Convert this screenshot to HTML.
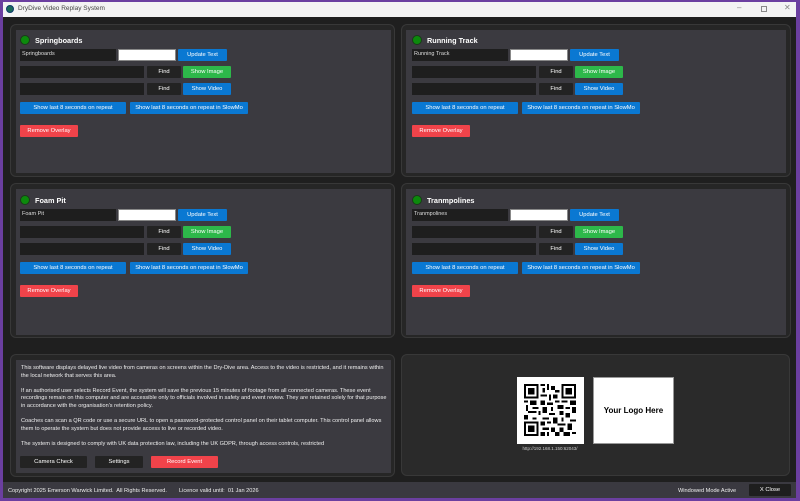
<!DOCTYPE html>
<html><head><meta charset="utf-8"><style>
*{margin:0;padding:0;box-sizing:border-box}
body{width:800px;height:501px;background:#6b3fa0;font-family:"Liberation Sans",sans-serif;position:relative;overflow:hidden}
.win{position:absolute;left:3px;top:2px;width:793px;height:496px;background:#1f1f1f}
.tb{position:absolute;left:0;top:0;width:793px;height:15px;background:#f3f3f3;font-size:6.5px;color:#444}
.a{position:absolute;white-space:nowrap}
.card{position:absolute;background:#262626;border:1px solid #383838;border-radius:6px}
.inner{position:absolute;background:#3b3a40}
.in{position:absolute;background:#1e1e1e;height:12px;color:#ddd;font-size:5.5px;padding:2px 2px;line-height:7px;white-space:nowrap}
.b{position:absolute;height:12px;color:#fff;font-size:5.8px;text-align:center;line-height:12px;border-radius:1px;white-space:nowrap}
.bl{background:#0a78d2}.gr{background:#2db84a}.rd{background:#f0434a}.dk{background:#232323}
.tt{position:absolute;color:#fff;font-weight:bold;font-size:7.3px;white-space:nowrap}
.dot{position:absolute;width:10px;height:10px;border-radius:50%;background:#0c8a0c;border:1px solid #1a3a1a}
.txt{position:absolute;color:#eee;font-size:5.6px;line-height:7.6px}
</style></head><body>
<div class="win">
<div class="tb"><div class="a" style="left:3px;top:3px;width:8px;height:8px;border-radius:50%;background:#1a6a5a;border:1px solid #0c3a6a"></div><div class="a" style="left:15px;top:3px">DryDive Video Replay System</div>
<div class="a" style="left:734px;top:1px;color:#888;font-size:8px">–</div><div class="a" style="left:758px;top:4px;width:6px;height:6px;border:1px solid #888"></div><div class="a" style="left:781px;top:1px;color:#888;font-size:8px">✕</div></div>
</div>

<div class="card" style="left:10px;top:24px;width:385px;height:153px"></div>
<div class="inner" style="left:16px;top:30px;width:375px;height:143px"></div>
<div class="card" style="left:401px;top:24px;width:390px;height:153px"></div>
<div class="inner" style="left:406px;top:30px;width:380px;height:143px"></div>
<div class="card" style="left:10px;top:183px;width:385px;height:155px"></div>
<div class="inner" style="left:16px;top:189px;width:375px;height:146px"></div>
<div class="card" style="left:401px;top:183px;width:390px;height:155px"></div>
<div class="inner" style="left:406px;top:189px;width:380px;height:146px"></div>

<div style="position:absolute;left:0;top:0">
<div class="dot" style="left:20px;top:35px"></div><div class="tt" style="left:35px;top:36px">Springboards</div>
<div class="in" style="left:20px;top:49px;width:96px">Springboards</div><div class="a" style="left:118px;top:49px;width:58px;height:12px;background:#fff;border:1px solid #888"></div><div class="b bl" style="left:178px;top:49px;width:49px">Update Text</div>
<div class="in" style="left:20px;top:66px;width:124px"></div><div class="b dk" style="left:147px;top:66px;width:34px">Find</div><div class="b gr" style="left:183px;top:66px;width:48px">Show Image</div>
<div class="in" style="left:20px;top:83px;width:124px"></div><div class="b dk" style="left:147px;top:83px;width:34px">Find</div><div class="b bl" style="left:183px;top:83px;width:48px">Show Video</div>
<div class="b bl" style="left:20px;top:102px;width:106px">Show last 8 seconds on repeat</div><div class="b bl" style="left:130px;top:102px;width:118px">Show last 8 seconds on repeat in SlowMo</div>
<div class="b rd" style="left:20px;top:125px;width:58px">Remove Overlay</div>
</div>
<div style="position:absolute;left:392px;top:0">
<div class="dot" style="left:20px;top:35px"></div><div class="tt" style="left:35px;top:36px">Running Track</div>
<div class="in" style="left:20px;top:49px;width:96px">Running Track</div><div class="a" style="left:118px;top:49px;width:58px;height:12px;background:#fff;border:1px solid #888"></div><div class="b bl" style="left:178px;top:49px;width:49px">Update Text</div>
<div class="in" style="left:20px;top:66px;width:124px"></div><div class="b dk" style="left:147px;top:66px;width:34px">Find</div><div class="b gr" style="left:183px;top:66px;width:48px">Show Image</div>
<div class="in" style="left:20px;top:83px;width:124px"></div><div class="b dk" style="left:147px;top:83px;width:34px">Find</div><div class="b bl" style="left:183px;top:83px;width:48px">Show Video</div>
<div class="b bl" style="left:20px;top:102px;width:106px">Show last 8 seconds on repeat</div><div class="b bl" style="left:130px;top:102px;width:118px">Show last 8 seconds on repeat in SlowMo</div>
<div class="b rd" style="left:20px;top:125px;width:58px">Remove Overlay</div>
</div>
<div style="position:absolute;left:0;top:160px">
<div class="dot" style="left:20px;top:35px"></div><div class="tt" style="left:35px;top:36px">Foam Pit</div>
<div class="in" style="left:20px;top:49px;width:96px">Foam Pit</div><div class="a" style="left:118px;top:49px;width:58px;height:12px;background:#fff;border:1px solid #888"></div><div class="b bl" style="left:178px;top:49px;width:49px">Update Text</div>
<div class="in" style="left:20px;top:66px;width:124px"></div><div class="b dk" style="left:147px;top:66px;width:34px">Find</div><div class="b gr" style="left:183px;top:66px;width:48px">Show Image</div>
<div class="in" style="left:20px;top:83px;width:124px"></div><div class="b dk" style="left:147px;top:83px;width:34px">Find</div><div class="b bl" style="left:183px;top:83px;width:48px">Show Video</div>
<div class="b bl" style="left:20px;top:102px;width:106px">Show last 8 seconds on repeat</div><div class="b bl" style="left:130px;top:102px;width:118px">Show last 8 seconds on repeat in SlowMo</div>
<div class="b rd" style="left:20px;top:125px;width:58px">Remove Overlay</div>
</div>
<div style="position:absolute;left:392px;top:160px">
<div class="dot" style="left:20px;top:35px"></div><div class="tt" style="left:35px;top:36px">Tranmpolines</div>
<div class="in" style="left:20px;top:49px;width:96px">Tranmpolines</div><div class="a" style="left:118px;top:49px;width:58px;height:12px;background:#fff;border:1px solid #888"></div><div class="b bl" style="left:178px;top:49px;width:49px">Update Text</div>
<div class="in" style="left:20px;top:66px;width:124px"></div><div class="b dk" style="left:147px;top:66px;width:34px">Find</div><div class="b gr" style="left:183px;top:66px;width:48px">Show Image</div>
<div class="in" style="left:20px;top:83px;width:124px"></div><div class="b dk" style="left:147px;top:83px;width:34px">Find</div><div class="b bl" style="left:183px;top:83px;width:48px">Show Video</div>
<div class="b bl" style="left:20px;top:102px;width:106px">Show last 8 seconds on repeat</div><div class="b bl" style="left:130px;top:102px;width:118px">Show last 8 seconds on repeat in SlowMo</div>
<div class="b rd" style="left:20px;top:125px;width:58px">Remove Overlay</div>
</div>

<div class="card" style="left:10px;top:354px;width:385px;height:123px"></div>
<div class="inner" style="left:16px;top:360px;width:375px;height:113px"></div>
<div class="txt" style="left:21px;top:365px;width:368px">This software displays delayed live video from cameras on screens within the Dry-Dive area. Access to the video is restricted, and it remains within the local network that serves this area.<br><br>If an authorised user selects Record Event, the system will save the previous 15 minutes of footage from all connected cameras. These event recordings remain on this computer and are accessible only to officials involved in safety and event review. They are retained solely for that purpose in accordance with the organisation's retention policy.<br><br>Coaches can scan a QR code or use a secure URL to open a password-protected control panel on their tablet computer. This control panel allows them to operate the system but does not provide access to live or recorded video.<br><br>The system is designed to comply with UK data protection law, including the UK GDPR, through access controls, restricted</div>
<div class="b dk" style="left:20px;top:456px;width:67px">Camera Check</div>
<div class="b dk" style="left:95px;top:456px;width:48px">Settings</div>
<div class="b rd" style="left:151px;top:456px;width:67px">Record Event</div>

<div class="card" style="left:401px;top:354px;width:389px;height:122px;background:#2a2a2a"></div>
<div class="a" style="left:517px;top:377px;width:67px;height:67px;background:#fff"></div>
<svg class="a" style="left:524px;top:384px" width="52" height="52" viewBox="0 0 25 25" shape-rendering="crispEdges">
<g fill="#000"><path d="M0 0h7v7h-7zM18 0h7v7h-7zM0 18h7v7h-7z"/></g>
<g fill="#fff"><path d="M1 1h5v5h-5zM19 1h5v5h-5zM1 19h5v5h-5z"/></g>
<g fill="#000"><path d="M2 2h3v3h-3zM20 2h3v3h-3zM2 20h3v3h-3z"/>
<path d="M8 0h2v1h-2zM11 0h1v3h-1zM13 1h2v2h-2zM9 2h1v2h-1zM15 3h2v1h-2zM8 5h3v1h-3zM12 5h1v3h-1zM14 5h2v2h-2zM0 8h2v1h-2zM3 8h3v2h-3zM8 8h2v2h-2zM11 9h3v1h-3zM15 8h2v1h-2zM18 8h3v1h-3zM22 8h3v2h-3zM1 10h1v3h-1zM4 11h3v1h-3zM9 11h2v3h-2zM13 11h1v2h-1zM16 10h3v2h-3zM20 11h2v1h-2zM23 11h2v3h-2zM2 13h4v1h-4zM7 13h1v2h-1zM12 14h3v1h-3zM17 13h2v2h-2zM20 14h2v2h-2zM0 15h2v2h-2zM4 16h2v1h-2zM9 16h3v1h-3zM14 16h2v3h-2zM18 16h1v2h-1zM22 17h3v1h-3zM8 18h2v2h-2zM11 18h2v1h-2zM16 19h4v1h-4zM21 19h2v3h-2zM9 21h3v1h-3zM13 21h2v2h-2zM17 21h2v2h-2zM8 23h2v2h-2zM11 23h1v2h-1zM15 23h2v2h-2zM19 23h3v2h-3zM23 23h2v1h-2z"/></g>
</svg>
<div class="a" style="left:500px;top:446px;width:100px;text-align:center;color:#ccc;font-size:4.5px">http://192.168.1.150:62043/</div>
<div class="a" style="left:593px;top:377px;width:81px;height:67px;background:#fff;border:1px solid #999;color:#000;font-weight:bold;font-size:8px;text-align:center;line-height:65px">Your Logo Here</div>

<div class="a" style="left:3px;top:482px;width:793px;height:16px;background:#3a3940"></div>
<div class="a" style="left:8px;top:488px;color:#eee;font-size:5.6px">Copyright 2025 Emerson Warwick Limited.&nbsp; All Rights Reserved.</div>
<div class="a" style="left:179px;top:488px;color:#eee;font-size:5.6px">Licence valid until:&nbsp; 01 Jan 2026</div>
<div class="a" style="left:678px;top:488px;color:#eee;font-size:5.6px">Windowed Mode Active</div>
<div class="b" style="left:749px;top:484px;width:42px;background:#1e1e1e">X Close</div>
</body></html>
